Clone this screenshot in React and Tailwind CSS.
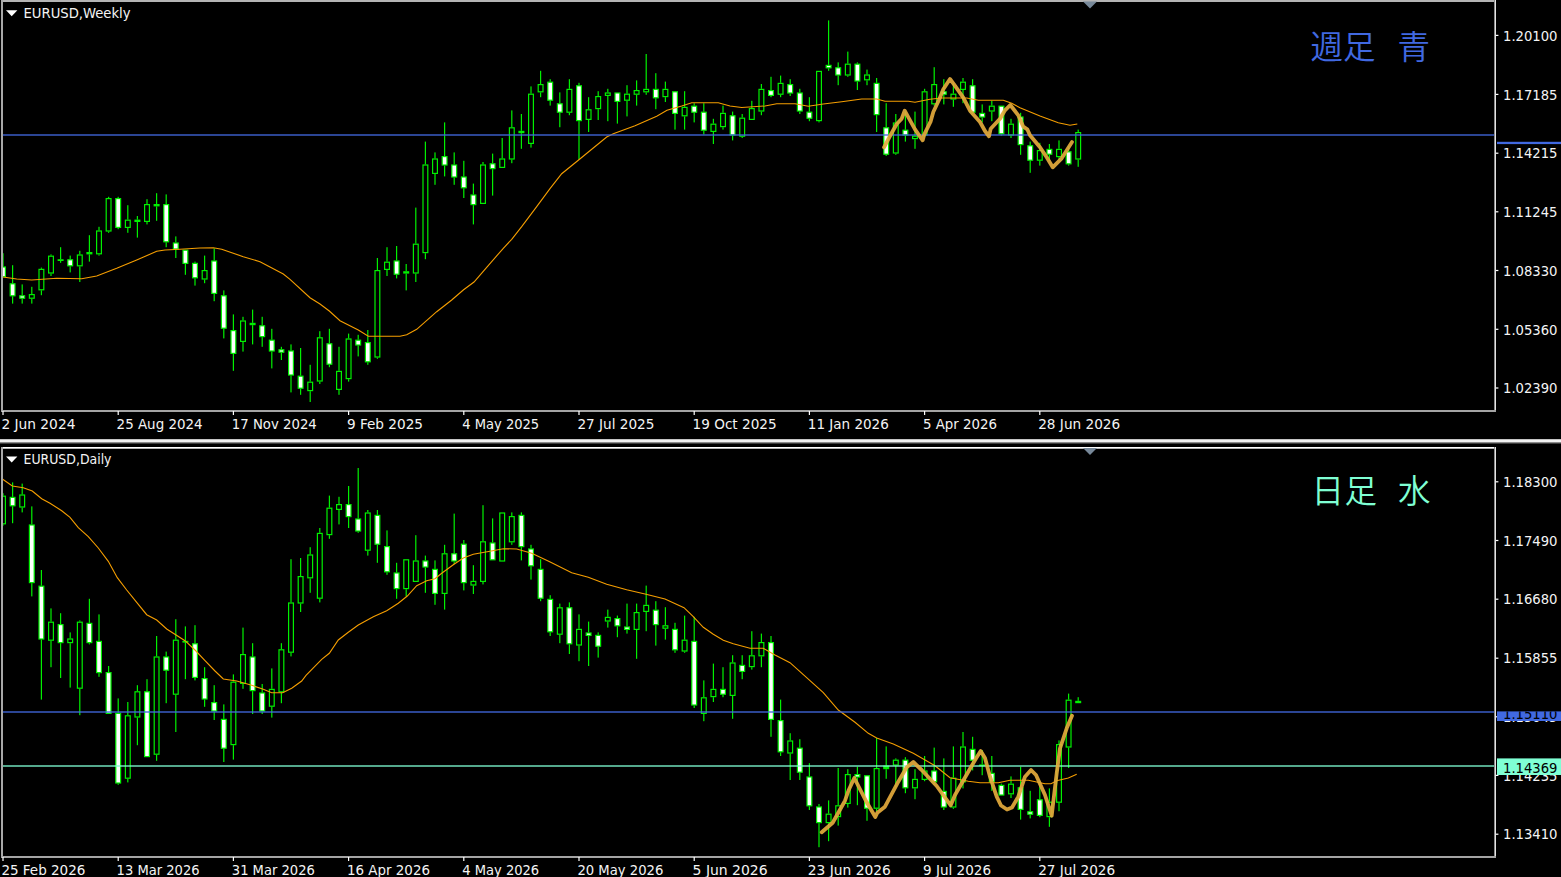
import React from "react";

// Chart pixels are 1.2 screen pixels wide; candles are spaced 8 chart pixels apart.
const U = 1.2;
const snap = (v) => Math.round(v / U);

// Each candle: kind (h = hollow, b = filled, d = doji), high, top, bottom, low.
const WEEKLY = `b 253.5 266.7 276.7 277|b 265 283.7 296 303.7|b 284.7 295.3 298.7 303.7|h 287 294 298.7 303.7|h 267.3 269 290.3 295.3|h 254.3 255.7 273.7 276|d 247.3 258.7 260.3 262.7|b 256 259.3 266.3 272.7|h 251 254.3 266.3 281.7|d 235.3 252.3 254 261|h 227.3 230.3 254.7 255.5|h 197 198 231.7 232.7|b 197 198 228 229.3|h 205.3 220 228 232.7|d 216.3 220 221.7 237.7|h 199.3 204 222 224.3|d 193.3 204.3 206 220.7|b 194.3 204 242.3 246.7|b 236.3 242.3 250 258|b 249 249.3 264 275|b 261.3 263 278.3 285.7|h 256 270 279.7 282.7|b 248.3 260.3 294 300.7|b 290.7 295.3 328.7 338.3|b 314.7 330.3 353.7 370.7|h 317 320.3 342 351.3|d 309.7 323.3 325 344.3|b 317 325.3 337 346.3|b 329 339.7 351.7 368.3|b 346.7 349.7 352.8 359.7|b 344.3 350.7 375.3 392.3|b 348.3 376 388.7 394.7|h 365 381.7 391 401.7|h 331.3 337.3 381.3 383.7|b 329 343.7 364.7 367|h 347 371.3 390 394.7|h 333.7 338.3 379 381.3|b 335 340 345.3 356|b 330.3 342.3 362.3 364.7|h 258 270.3 357 358.3|h 247.3 262 269.7 275.7|b 246 260.7 274.7 278.3|d 264.3 271.3 273 290|h 207.3 243.7 273.3 281.7|h 142 164.7 253.7 259.3|h 152.7 158.7 174 184.7|b 122.7 156 165.7 176.3|b 152.7 164.7 177.7 184.7|b 161 176.3 188.3 198|b 183.7 194.3 205 224.7|h 162.3 164.7 203.7 203.7|b 154 163.3 169 195.7|h 138 158.3 168 168|h 110.7 127.3 159.7 163.3|d 114.3 131 133 148.7|h 86.7 93.7 144 147.3|h 71.3 84 92.7 97.3|b 79.3 81.7 100.7 105.7|b 92.3 103.3 112.7 127.3|h 79.3 89 112.7 115.3|b 83 85.3 121 159.7|h 97.3 109.3 120 132|h 91.3 96.3 109 120|h 89 92.7 96 121|b 92.3 92.3 102 123.7|h 85.3 94 100.7 116.7|h 80.7 90 95 105.7|h 54.3 89 92.3 94.7|b 73 89 98.3 109.3|h 82 89.3 97.3 102|b 91 91.3 114 129.7|h 91 107 116.7 129.7|b 103.3 106 112.7 122.7|b 102.7 112 131 134.7|h 119 124 132 144|h 106 113 127 129.7|b 111.7 115.3 135 140.7|h 114 117.7 136.7 137.7|h 101 108 120 120|h 84 89 111.7 115.3|b 77 90 96 97.3|h 75.7 83 94.7 97.3|b 79.3 84 94 96|b 89 92.7 111.3 114|b 97.3 112 119 121|h 71 71 121.3 122.7|b 20.3 65 68.7 70.3|b 62.3 67.3 75.7 85.3|h 51.3 64 75.7 77|b 62.3 63.7 81.7 90|h 69.7 74.7 80.7 85.3|b 78 83 115 132|b 103 127.3 155 156|h 114 122.7 153.7 155|b 111.7 130 135.3 141.7|h 112 135.3 138 148.7|h 89 91.3 135.3 137|h 67.3 84 104.7 105.7|b 79 90.7 93.7 104.7|h 83.3 94 100 107|h 78.3 81 90 102.7|b 79 85.7 112.7 114|b 104.7 113 117.7 122|h 101 105 112 120.7|b 105 106 134.7 135.3|h 119 124 135.3 138|b 112.7 116.7 145 155|b 142 145.3 160.7 173|h 143 150.3 160.7 165.7|b 144 149 155 161|h 140.3 149 157.3 160|b 146.7 151.3 164.3 165.7|h 129.3 132.3 159.3 166.7`;

const DAILY = `h 493.3 495.7 524 525.7|b 482.3 497.3 506 522.7|h 483.3 494.3 507.3 512|b 506.3 524.7 583 596|b 570 585.7 639.3 699|h 608.7 621.7 640.7 667|b 613 624 642.7 677.7|h 632.3 638.3 642.7 687.3|h 620 621.7 688.3 714.7|b 598.7 623 642.7 644|b 614.3 641 672.7 676.7|b 666 672 713.7 713.7|b 698.3 712.7 783 785.3|h 701.7 715 779.3 782|h 685 691 717.3 744.7|b 679 691 756.7 756.7|h 635.7 656.3 755.3 761.3|b 651.3 656.3 670.3 702.7|h 619 639.3 694.7 731.7|d 626.3 640.7 642.3 679|b 625.3 643 677.7 680|b 667.3 678 699 706.3|b 685 702 712 719.7|b 704.3 718.7 748.3 761.7|h 674.3 681.3 745.7 759|h 627.3 654 683.7 688.3|b 643 656.3 691.7 713.7|b 684 692.3 711.7 713.7|h 668.3 689 706.3 717|h 643.3 649.3 692.3 702.7|h 559.3 602.3 652.3 656|h 558 576 603.7 612|h 547.3 554.3 578 592.7|h 528 533 598.3 602|h 495.3 508 535 539.3|h 497 504.3 509.7 524.3|b 486 504 516.7 528|b 468 518.3 531.3 532.7|h 510.3 512.3 550.3 555.3|b 510.3 515 544.3 562.7|b 530.3 546.3 572 574.7|b 562.7 572.3 588.7 598.7|h 559 559 588.7 596.7|h 535 560.3 581.7 581.7|b 555.3 560.3 567.3 592.7|b 560.3 568.7 593.7 604.7|h 544.7 553.3 593.7 609.7|b 513.3 553 561.3 564|b 540 543.7 582.7 590|h 565.3 581 585.3 593.7|h 505 541 581.7 584|b 518.3 542.3 560 560|h 512.3 512.3 561.3 561.3|h 512.3 516 542 544.7|b 512.7 514.7 547 560|b 544.7 548.3 566.3 579.7|b 559.3 568.9 598.7 601|b 595 598.7 632 635.7|h 603.3 607 634.3 643|b 602.3 607 644 653.7|h 614.3 629 645.3 660.7|b 621.3 632 635.7 665.7|b 632.3 634.7 646.7 657.3|h 609.7 616.7 621.3 627.3|b 615.3 618 626.3 637|b 603.3 626 629.7 633.3|h 603.3 611.7 629.7 659|h 585.3 604.7 611.7 631|b 601 609.7 625 645.7|h 607 625 628.7 639.3|b 622.7 628.7 650 652.7|h 615.3 639.7 651 652.7|b 616.7 640.3 705.3 707.7|h 680 697 713.7 721|h 663.3 688.7 697.7 701.7|b 667 688.7 694.7 697|h 655 662 695.7 718.7|b 655 664.7 671.7 679|h 631 655 667 669.3|h 633.3 641.7 656.3 667|b 635.7 641.7 719.7 736.7|b 699.3 720 752 755.7|h 733 740.3 753.3 780|b 739 747.7 772.3 780|b 763 776.3 806.3 809.7|b 804 806.3 822.7 847|h 800 813.3 823 841|h 768 805.3 817 825.3|h 769 774 803.7 807|b 766.7 774 777 804.7|b 775 775.3 808.3 820.7|h 738 768 808.3 811|d 746 765.7 768.7 778.7|h 758 759.7 765.7 786.7|b 757 759.7 788 793|h 769.3 778.7 788 798.7|h 756 770.3 779.7 780.7|b 747.3 770.3 782 784.3|b 758 790.7 807 809.7|h 746 777.7 807 808.7|h 731.7 746.3 782.7 788|b 736.7 748.7 761.3 770|d 750 764.3 766 775|b 756 773 782.3 790.7|b 783 785 795 795.7|h 776 783.3 794 797.7|b 766.7 787 809.7 819.3|b 790.7 811 814.7 818|b 781 799 815.7 816.7|h 788 801 816.7 826.3|h 740.3 744.3 802.7 811|h 693.7 699.7 747.7 767.7|d 697.3 701 703 703.7`;

const WEEKLY_MA =
  "3,277 16.7,279 31.7,280 56.7,278.2 81.7,278.7 96.7,276 116.7,268.3 136.7,260 156.7,251.3 165,250 180,249.3 200,248 213.3,247.7 221.7,249.3 243.3,256.7 260,261.7 270,267 283.3,274 290,279.3 310,297.7 320,304 329.3,311 340,320.7 358.3,330 368.3,336.3 400,336.3 406.7,334.7 416.7,329.3 436.7,311.7 451.7,300 463.3,290 474,282 486.7,267.3 503.3,248.3 511.7,239.3 521.7,226.7 536.7,206.7 550,188.7 561.7,173.7 578.3,160.3 606.7,137 613.3,133.7 635,125.7 656.7,116.3 667,110.3 681.7,106 691.7,102.7 718.3,102.7 730,106 741.7,107.5 765,106 776.7,103.7 795,103.7 808.3,106.3 823.3,104 841.7,101.7 861.7,99 876.7,99 885,101.3 908.3,101.3 915,102.3 930,99.3 941.7,98 966.7,98 978.3,100.3 1003.3,100.3 1011.7,103.3 1020,107.7 1040,116 1058.3,122.7 1070,125.3 1077.3,124";
const DAILY_MA =
  "2.7,479.3 12.3,486 23.3,487.7 32.3,491 41.7,498.7 50,503.3 61.7,510.7 70,517.3 78.3,527.7 88.3,536.7 98.3,548 108.3,561.3 117.3,577.7 126.7,590 136.7,602.3 146.7,614.7 156.7,620 166.7,629 185,640.7 195,650 205,660.7 215,671 223.3,679 236.7,681 251.7,685.3 263.3,689.3 271.7,692.7 282.7,692.7 291.7,688.3 301.7,681 306,675.3 321.7,659.3 329.3,653.3 338.3,640 348.3,632.3 358.3,625 373.3,616.7 386.7,610.7 398.3,603.3 407.3,596 416.7,585.7 426.7,580.7 435,578.7 441.7,573.3 453.3,564.7 463.3,558 473.3,554.3 490,551.3 503.3,548.7 516.7,549 531.7,553.3 549.7,561.7 571.7,572.7 588.3,577.3 606.7,584.3 626.7,589.7 645,594 665,599 684,607.7 693.3,616.7 703.3,627.3 713.3,634.3 723.3,640.3 733.3,643.7 750,648.3 763.3,648.3 775,655 790,662.7 810,680.7 823.3,692.7 838.3,710 855,722.3 868.3,733.3 876.7,738 893.3,744 913.3,753.3 935,765.7 950,777.7 968.3,781.3 980,782.7 998.3,782.7 1010,780.3 1028.3,780.3 1045,783.7 1051,783.7 1056.7,780.7 1068.3,778 1076.7,774.3";

const WEEKLY_ZIGZAG =
  "884,147.3 890,136 896.7,124 901.7,118.7 904.7,110.7 915,129.3 922.7,140.3 924.3,134.3 930.7,121.3 933.3,112 939.3,99.3 943.3,89.3 950,79 954,84.3 963.3,97.7 970,110.7 980,122 985,131 989,136.3 990.7,128.7 1000,118.7 1004.7,110.7 1010.3,105 1018.3,115.3 1023.3,126.7 1027.3,129.3 1030,135.3 1040,147.3 1046.7,157.3 1052.7,167.3 1061.7,158.3 1072,142";
const DAILY_ZIGZAG =
  "821.7,832.3 832.7,822.7 845,800.7 848.5,790.5 854.3,778 866.7,802.3 875.3,817 877.3,812.7 885,806.7 898.3,781.7 906.7,767.3 913.3,762 921.7,770 936.7,786 950.7,805.3 955,795 970,768.7 976,758.5 980.7,751 985,758 990,776.7 996.7,796.7 1001,805.5 1007,809.5 1012,807.5 1018.3,796.7 1025,776.7 1031,770 1036,775 1045,795 1051.7,815.7 1053.3,801.7 1056.7,773.3 1060,748.3 1066.7,728.3 1072,715.7";

const FONT = '"DejaVu Sans Condensed", "DejaVu Sans", sans-serif';

function Candles({ data }) {
  return (
    <g transform={`scale(${U})`}>
      {data.split("|").map((row, i) => {
        const [kind, ...v] = row.split(" ");
        const [hi, top, bot, lo] = v.map((n) => snap(Number(n)));
        const x = 8 * i + 2;
        const h = Math.max(bot - top, kind === "d" ? 1 : 3);
        return (
          <g key={i} fill="#00f000">
            {top > hi && <rect x={x} y={hi} width="1" height={top - hi} />}
            {lo > top + h && <rect x={x} y={top + h} width="1" height={lo - top - h} />}
            {kind === "d" ? (
              <rect x={x - 2} y={top} width="5" height={Math.max(h, 1.5)} />
            ) : (
              <rect
                x={x - 1.5}
                y={top + 0.5}
                width="4"
                height={h - 1}
                fill={kind === "b" ? "#ffffff" : "#000000"}
                stroke="#00f000"
                strokeWidth="1"
              />
            )}
          </g>
        );
      })}
    </g>
  );
}

function Price({ y, label, fill = "#f4f4f4" }) {
  return (
    <text x="1503" y={y + 5.2} fontSize="14.2" textLength="54.5" lengthAdjust="spacingAndGlyphs" fill={fill}>
      {label}
    </text>
  );
}

function Chart({ top, height, frameTop, frameBottom, title, candles, ma, zigzag, prices, dates, lines, marker, children, overlay }) {
  const clip = `plot-${top}`;
  return (
    <svg
      className="block w-[1561px] shrink-0"
      style={{ height }}
      viewBox={`0 ${top} 1561 ${height}`}
      fontFamily={FONT}
    >
      <rect x="0" y={top} width="1561" height={height} fill="#000" />
      <clipPath id={clip}>
        <rect x="2" y={frameTop} width="1493" height={frameBottom - frameTop} />
      </clipPath>
      <g clipPath={`url(#${clip})`}>
        <Candles data={candles} />
        <polyline points={ma} fill="none" stroke="#f59e00" strokeWidth="1.1" />
        {lines.map(([y, color]) => (
          <rect key={y} x="2" y={y} width="1493" height="2" fill={color} opacity="0.66" />
        ))}
        <polyline
          points={zigzag}
          fill="none"
          stroke="#e4aa3c"
          strokeWidth="3.8"
          strokeLinecap="round"
          strokeLinejoin="round"
          opacity="0.92"
        />
      </g>
      <rect x="1" y={frameTop} width="1495" height="2" fill="#b4b4b4" />
      <rect x="1" y={frameTop} width="1495" height="1" fill={title.edge} />
      <rect x="1" y={frameTop} width="2" height={frameBottom - frameTop} fill="#a8a8a8" />
      <rect x="1494" y={frameTop} width="1" height={frameBottom - frameTop} fill="#8a8a8a" />
      <rect x="1495" y={frameTop} width="1" height={frameBottom - frameTop + 1} fill="#e4e4e4" />
      <rect x="1" y={frameBottom} width="1495" height="2" fill="#a4a4a4" />
      <path d={marker} fill="#778899" />
      <path d={`M6 ${title.y - 7.6}h11.4l-5.7 6z`} fill="#fff" />
      <text x="23.5" y={title.y} fontSize="14.2" fill="#f4f4f4" textLength={title.width} lengthAdjust="spacingAndGlyphs">
        {title.text}
      </text>
      {prices.map(([y, label]) => (
        <g key={label}>
          <rect x="1495.8" y={y - 0.6} width="2.6" height="1.2" fill="#fff" />
          <Price y={y} label={label} />
        </g>
      ))}
      {dates.map(([label, width], i) => (
        <g key={label}>
          <rect x={2.4 + i * 115.2} y={frameBottom + 1} width="1.2" height="4" fill="#fff" />
          <text
            x={1.4 + i * 115.2}
            y={title.dateY}
            fontSize="14.2"
            fill="#f4f4f4"
            textLength={width}
            lengthAdjust="spacingAndGlyphs"
          >
            {label}
          </text>
        </g>
      ))}
      {overlay}
      {children}
    </svg>
  );
}

export default function App() {
  return (
    <main className="flex h-[877px] w-[1561px] flex-col overflow-hidden bg-black">
      <Chart
        top={0}
        height={439}
        frameTop={0}
        frameBottom={410}
        title={{ text: "EURUSD,Weekly", width: 107, y: 17.8, dateY: 429.4, edge: "#b4b4b4" }}
        candles={WEEKLY}
        ma={WEEKLY_MA}
        zigzag={WEEKLY_ZIGZAG}
        lines={[[134, "#4169e1"]]}
        marker="M1083 1.5h14l-7 7z"
        prices={[
          [35.4, "1.20100"],
          [94.4, "1.17185"],
          [153.2, "1.14215"],
          [211.8, "1.11245"],
          [270.5, "1.08330"],
          [329.3, "1.05360"],
          [388, "1.02390"],
        ]}
        dates={[
          ["2 Jun 2024", 74],
          ["25 Aug 2024", 86],
          ["17 Nov 2024", 85],
          ["9 Feb 2025", 76],
          ["4 May 2025", 77],
          ["27 Jul 2025", 77],
          ["19 Oct 2025", 84],
          ["11 Jan 2026", 81],
          ["5 Apr 2026", 74],
          ["28 Jun 2026", 82],
        ]}
        overlay={<rect x="1497" y="141.8" width="64" height="2.3" fill="#4169e1" />}
      >
        <text
          x="1310.5 1343 1397.5"
          y="58.8"
          fontSize="32.5"
          fontWeight="350"
          fill="#4169e1"
          fontFamily='"Noto Sans CJK JP", sans-serif'
        >
          週足青
        </text>
      </Chart>
      <div className="flex w-full shrink-0 flex-col">
        <div className="h-px bg-[#c4c4c4]" />
        <div className="h-[2px] bg-[#f2f2f2]" />
        <div className="h-px bg-[#8c8c8c]" />
        <div className="h-px bg-[#3c3c3c]" />
      </div>
      <Chart
        top={444}
        height={433}
        frameTop={447}
        frameBottom={856}
        title={{ text: "EURUSD,Daily", width: 88, y: 464, dateY: 875.4, edge: "#ffffff" }}
        candles={DAILY}
        ma={DAILY_MA}
        zigzag={DAILY_ZIGZAG}
        lines={[
          [711, "#4169e1"],
          [765, "#7fffd4"],
        ]}
        marker="M1083 448h14l-7 7z"
        prices={[
          [481.8, "1.18300"],
          [540.5, "1.17490"],
          [599.2, "1.16680"],
          [658.2, "1.15855"],
          [716.8, "1.15045"],
          [775.4, "1.14235"],
          [834.2, "1.13410"],
        ]}
        dates={[
          ["25 Feb 2026", 84],
          ["13 Mar 2026", 83],
          ["31 Mar 2026", 83],
          ["16 Apr 2026", 83],
          ["4 May 2026", 77],
          ["20 May 2026", 86],
          ["5 Jun 2026", 75],
          ["23 Jun 2026", 83],
          ["9 Jul 2026", 68],
          ["27 Jul 2026", 77],
        ]}
        overlay={
          <g>
            <clipPath id="price-tag">
              <rect x="1497" y="711.4" width="64" height="9.6" />
            </clipPath>
            <rect x="1497" y="711.4" width="64" height="9.6" fill="#4169e1" />
            <g clipPath="url(#price-tag)">
              <Price y={713.6} label="1.15110" fill="#000" />
            </g>
            <rect x="1497" y="758.4" width="64" height="16.6" fill="#7fffd4" />
            <Price y={767.6} label="1.14369" fill="#000" />
          </g>
        }
      >
        <text
          x="1311.5 1344.5 1398"
          y="502.8"
          fontSize="32.5"
          fontWeight="350"
          fill="#7fffd4"
          fontFamily='"Noto Sans CJK JP", sans-serif'
        >
          日足水
        </text>
      </Chart>
    </main>
  );
}
